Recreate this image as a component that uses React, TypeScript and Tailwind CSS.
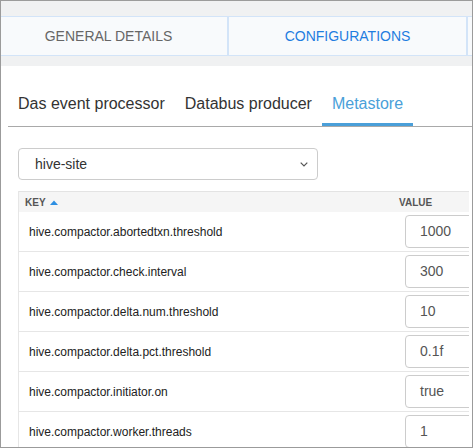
import React from 'react';

const rows: [string, string][] = [
  ['hive.compactor.abortedtxn.threshold', '1000'],
  ['hive.compactor.check.interval', '300'],
  ['hive.compactor.delta.num.threshold', '10'],
  ['hive.compactor.delta.pct.threshold', '0.1f'],
  ['hive.compactor.initiator.on', 'true'],
  ['hive.compactor.worker.threads', '1'],
];

export default function App() {
  return (
    <div className="w-[473px] h-[448px] overflow-hidden border border-[#9b9b9b] bg-white font-['Liberation_Sans',Arial,sans-serif]">
      {/* top tabs */}
      <div className="bg-[#f0f1f2] pt-[15px] pb-[10px]">
        <div className="flex -ml-[12px] h-[40px]">
          <div className="w-[239px] shrink-0 flex items-center justify-center border border-[#d3e4f8] bg-[#f8fafc] text-[14px] text-[#666]">
            GENERAL DETAILS
          </div>
          <div className="w-[239px] shrink-0 flex items-center justify-center border border-[#d3e4f8] bg-[#f8fafc] text-[14px] text-[#1f7de0]">
            CONFIGURATIONS
          </div>
          <div className="w-[239px] shrink-0 border border-[#d3e4f8] bg-[#f8fafc]" />
        </div>
      </div>

      {/* sub tabs */}
      <div className="pt-[18px] pl-[7px]">
        <div className="flex border-b border-[#a9a9a9]">
          <div className="px-[10px] pt-[11px] pb-[10px] leading-[18px] text-[16px] text-[#333] border-b-[3px] border-transparent">
            Das event processor
          </div>
          <div className="px-[10px] pt-[11px] pb-[10px] leading-[18px] text-[16px] text-[#333] border-b-[3px] border-transparent">
            Databus producer
          </div>
          <div className="px-[10px] pt-[11px] pb-[10px] leading-[18px] text-[16px] text-[#4a9fd9] border-b-[3px] border-[#4a9fd9]">
            Metastore
          </div>
        </div>
      </div>

      <div className="pl-[17px]">
        {/* select */}
        <div className="mt-[21px] w-[300px] h-[32px] rounded-[4px] border border-[#cccccc] flex items-center justify-between pl-[16px] pr-[9px]">
          <span className="text-[14px] text-[#333]">hive-site</span>
          <svg width="8" height="5" viewBox="0 0 8 5" fill="none">
            <polyline points="0.7,0.7 4,4 7.3,0.7" stroke="#555" strokeWidth="1.2" />
          </svg>
        </div>

        {/* table */}
        <div className="mt-[11px] w-[451px] overflow-hidden">
          <div className="w-[560px] border-l border-[#e6e6e6]">
            <div className="flex h-[21px] items-center bg-[#f5f5f5] border-t border-[#e3e3e3] text-[10px] font-bold text-[#555]">
              <div className="w-[376px] shrink-0 pl-[6px] flex items-center gap-[4px]">
                KEY
                <svg width="8" height="5" viewBox="0 0 8 5">
                  <polygon points="0,5 4,0.5 8,5" fill="#2d8fe2" />
                </svg>
              </div>
              <div className="pl-[4px]">VALUE</div>
            </div>
            {rows.map(([k, v]) => (
              <div key={k} className="flex h-[40px] items-center border-b border-[#e6e6e6]">
                <div className="w-[376px] shrink-0 pl-[10px] text-[12px] text-[#222]">{k}</div>
                <div className="ml-[10px] w-[120px] h-[33px] rounded-[4px] border border-[#cccccc] flex items-center pl-[14px] text-[14px] text-[#555]">
                  {v}
                </div>
              </div>
            ))}
          </div>
        </div>
      </div>
    </div>
  );
}
